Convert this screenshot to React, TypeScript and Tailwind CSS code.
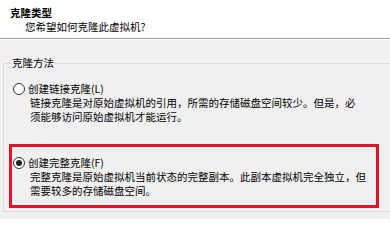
const FONT = "font-['Microsoft_YaHei','Noto_Sans_CJK_SC',sans-serif]";

const options = [
    {
        id: 'linked',
        label: '创建链接克隆(L)',
        lines: [
            '链接克隆是对原始虚拟机的引用，所需的存储磁盘空间较少。但是，必',
            '须能够访问原始虚拟机才能运行。',
        ],
        checked: false,
    },
    {
        id: 'full',
        label: '创建完整克隆(F)',
        lines: [
            '完整克隆是原始虚拟机当前状态的完整副本。此副本虚拟机完全独立，但',
            '需要较多的存储磁盘空间。',
        ],
        checked: true,
    },
];

function Radio({ checked }: { checked: boolean }) {
    return (
        <span className="w-[12px] h-[12px] rounded-full border border-[#333] bg-white flex items-center justify-center shrink-0">
            {checked && <span className="w-[6px] h-[6px] rounded-full bg-[#222]" />}
        </span>
    );
}

function Option({ option }: { option: (typeof options)[number] }) {
    return (
        <div>
            <div className="flex items-center h-[14px]">
                <Radio checked={option.checked} />
                <span className="ml-[3px] leading-[14px]">{option.label}</span>
            </div>
            <div className="pl-[17px]">
                {option.lines.map((line) => (
                    <p key={line} className="leading-[14px] whitespace-nowrap">
                        {line}
                    </p>
                ))}
            </div>
        </div>
    );
}

export default function App() {
    const [linked, full] = options;

    return (
        <div className={`w-[390px] h-[219px] overflow-hidden bg-[#f0f0f0] text-black text-[10.5px] ${FONT}`}>
            {/* Header */}
            <div className="h-[38px] bg-white pt-[6px] pl-[10px]">
                <h1 className="font-bold leading-[14px]">克隆类型</h1>
                <p className="pl-[15px] leading-[14px]">您希望如何克隆此虚拟机?</p>
            </div>
            <div className="h-[2px] border-t border-[#a0a0a0] border-b border-b-white" />

            {/* Group box */}
            <div className="pl-[3px] pt-[23px]">
                <div className="relative border border-[#dcdcdc] -mr-[8px] pt-[18px] pb-[3px]">
                    <span className="absolute -top-[8px] left-[7px] px-[1px] bg-[#f0f0f0] leading-[14px]">
                        克隆方法
                    </span>

                    <div className="pl-[9px]">
                        <Option option={linked} />
                    </div>

                    {/* Highlighted option */}
                    <div className="ml-[5px] mt-[20px] w-[370px] border-[3px] border-[#e0142c] pt-[9px] pb-[7px] pl-[1px]">
                        <Option option={full} />
                    </div>
                </div>
            </div>
        </div>
    );
}
